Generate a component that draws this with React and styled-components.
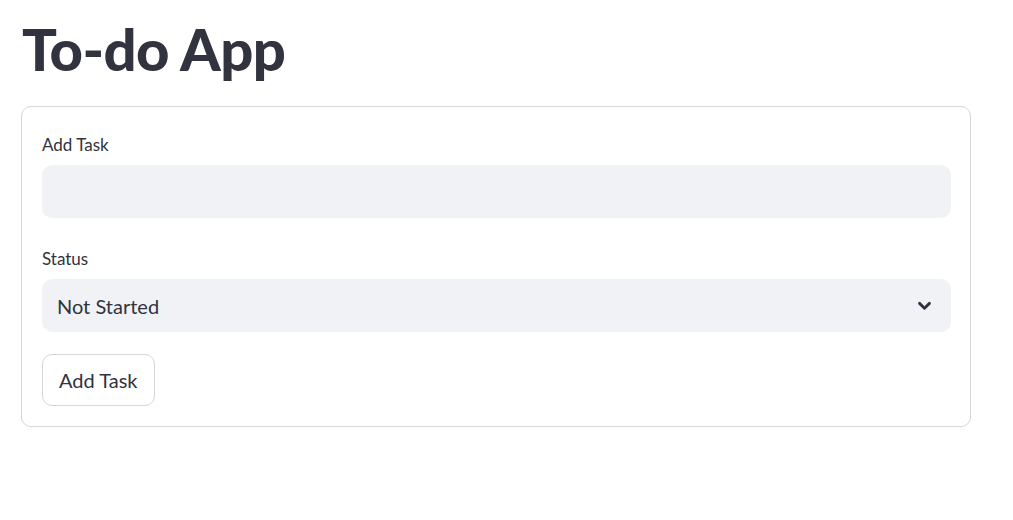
import React, { useState } from "react";
import styled, { createGlobalStyle } from "styled-components";

const GlobalStyle = createGlobalStyle`
  body {
    margin: 0;
    background: #fff;
    font-family: "Lato", "Noto Sans", sans-serif;
    color: #31333f;
  }
`;

const App = () => {
  const [task, setTask] = useState("");
  const [status, setStatus] = useState("Not Started");

  return (
    <Page>
      <GlobalStyle />
      <Title>To-do App</Title>
      <Card>
        <Field>
          <Label>Add Task</Label>
          <Input value={task} onChange={(e) => setTask(e.target.value)} />
        </Field>
        <Field>
          <Label>Status</Label>
          <SelectBox>
            <SelectValue>{status}</SelectValue>
            <Chevron width="17" height="17" viewBox="0 0 24 24">
              <path d="M5 9l7 7 7-7" fill="none" stroke="#31333f" strokeWidth="4" strokeLinecap="round" strokeLinejoin="round" />
            </Chevron>
          </SelectBox>
        </Field>
        <Button onClick={() => setStatus("Not Started")}>Add Task</Button>
      </Card>
    </Page>
  );
};

export default App;

const Page = styled.div`
  padding: 14px 0 0 21px;
  width: 950px;
`;

const Title = styled.h1`
  margin: 0 0 22px 1px;
  font-size: 58px;
  font-weight: 900;
  line-height: 70px;
  color: #31333f;
  letter-spacing: -0.6px;
`;

const Card = styled.div`
  border: 1px solid #d6d6d9;
  border-radius: 10px;
  padding: 24px 19px 20px 20px;
  display: flex;
  flex-direction: column;
  align-items: flex-start;
`;

const Field = styled.div`
  width: 100%;
  margin-bottom: 27px;

  & + & {
    margin-bottom: 22px;
  }
`;

const Label = styled.div`
  font-size: 17px;
  line-height: 28px;
  margin-bottom: 6px;
  color: #31333f;
`;

const Input = styled.input`
  box-sizing: border-box;
  display: block;
  width: 100%;
  height: 53px;
  border: none;
  border-radius: 10px;
  background: #f0f2f6;
  padding: 0 15px;
  font: inherit;
  font-size: 20px;
  color: #31333f;
  outline: none;
`;

const SelectBox = styled.div`
  box-sizing: border-box;
  width: 100%;
  height: 53px;
  border-radius: 10px;
  background: #f0f2f6;
  padding: 0 18px 0 15px;
  display: flex;
  align-items: center;
  justify-content: space-between;
`;

const SelectValue = styled.span`
  font-size: 20px;
  color: #31333f;
`;

const Chevron = styled.svg`
  display: block;
`;

const Button = styled.button`
  height: 52px;
  padding: 0 16px;
  border: 1px solid #d6d6d9;
  border-radius: 10px;
  background: #fff;
  font-family: inherit;
  font-size: 20px;
  color: #31333f;
  cursor: pointer;
`;
